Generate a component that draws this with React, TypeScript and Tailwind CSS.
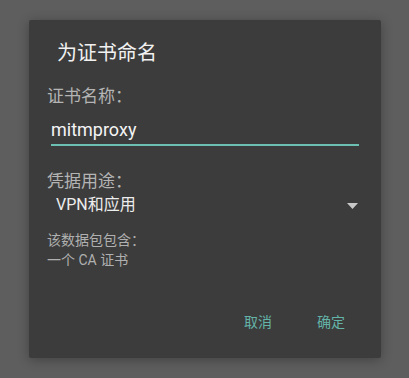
import React from "react";

export default function App() {
  const font = { fontFamily: 'Roboto, "Noto Sans CJK SC", sans-serif' };
  return (
    <div
      className="w-[409px] h-[378px] bg-[#5e5e5e] overflow-hidden pt-[20px] pl-[29px]"
      style={font}
    >
      <div className="w-[352px] h-[338px] bg-[#3c3c3c] rounded-[2px] shadow-[0_2px_12px_rgba(0,0,0,0.3)] flex flex-col">
        <div className="mt-[19px] ml-[28px] text-[20px] leading-[28px] text-[#f1f1f1]">
          为证书命名
        </div>
        <div className="mt-[17px] ml-[18px] text-[17px] leading-[24px] text-[#b4b4b4]">
          证书名称：
        </div>
        <div className="mt-[10px] mx-[22px] flex flex-col">
          <div className="text-[18px] leading-[24px] text-[#f4f4f4]">mitmproxy</div>
          <div className="mt-[2px] h-[2px] bg-[#6cbfb3]" />
        </div>
        <div className="mt-[23px] ml-[18px] text-[17px] leading-[24px] text-[#b4b4b4]">
          凭据用途：
        </div>
        <div className="ml-[27px] mr-[23px] flex items-center justify-between">
          <div className="text-[16px] leading-[24px] text-[#ededed]">VPN和应用</div>
          <svg width="11" height="6" viewBox="0 0 11 6" className="mt-[2px]">
            <polygon points="0,0 11,0 5.5,6" fill="#c8c8c8" />
          </svg>
        </div>
        <div className="mt-[13px] ml-[18px] text-[14px] leading-[20px] text-[#b0b0b0]">
          <div>该数据包包含：</div>
          <div>一个 CA 证书</div>
        </div>
        <div className="mt-[42px] mr-[36px] flex justify-end gap-[45px] text-[14px] leading-[20px] text-[#64b3a8]">
          <span>取消</span>
          <span>确定</span>
        </div>
      </div>
    </div>
  );
}
